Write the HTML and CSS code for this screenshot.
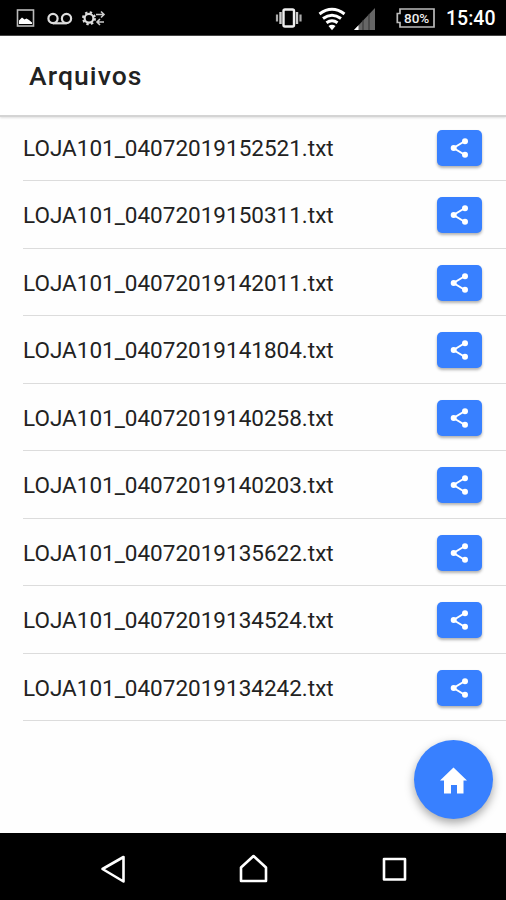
FILE: index.html
```
<!DOCTYPE html>
<html lang="pt-BR">
<head>
  <meta charset="UTF-8" />
  <title>Arquivos</title>
  <link rel="stylesheet" href="styles.css">
</head>
<body>
  <div class="status-bar">
    <svg class="status-left" width="106" height="35" viewBox="0 0 106 35">
      <!-- imagem -->
      <rect x="17.5" y="10" width="16" height="16" fill="none" stroke="#bbb" stroke-width="1.6" />
      <path d="M19 24v-3.5l3-3 2.5 2 2-1 2.5 1.5 3 2.5V24z" fill="#fff" />
      <!-- correio de voz -->
      <g fill="none" stroke="#ddd" stroke-width="2.2">
        <circle cx="53" cy="18.5" r="4.6" />
        <circle cx="66.5" cy="18.5" r="4.6" />
        <path d="M53 23.3h13.5" />
      </g>
      <!-- sincronização -->
      <circle cx="89" cy="18.3" r="4.4" fill="none" stroke="#ddd" stroke-width="2.2" />
      <circle cx="89" cy="18.3" r="6" fill="none" stroke="#ddd" stroke-width="2" stroke-dasharray="2.36 2.36" />
      <path d="M96 14.5h7M101 11.500l3 3-3 3M104 22h-7M100 19l-3 3 3 3" fill="none" stroke="#ccc" stroke-width="1.6" />
    </svg>
    <div class="status-right">
      <svg width="175" height="35" viewBox="265 0 175 35">
        <!-- vibrar -->
        <rect x="283.5" y="9.5" width="10.5" height="17" rx="1.5" fill="none" stroke="#eee" stroke-width="2.4" />
        <path d="M280.5 12v12M297 12v12" stroke="#ccc" stroke-width="2.4" />
        <path d="M277 14.5v7M300.500 14.5v7" stroke="#aaa" stroke-width="2.2" />
        <!-- wifi -->
        <g fill="none" stroke="#fff" stroke-width="3">
          <path d="M319.5 14q12.500-9.500 25 0" />
          <path d="M323 18.500q9-6.500 18 0" />
          <path d="M326.500 22.700q5.500-4 11 0" />
        </g>
        <path d="M328.500 26q3.500-2.500 7 0l-3.500 4.300z" fill="#fff" />
        <!-- sinal -->
        <path d="M354 30L375 8v22z" fill="#666" />
        <path d="M354 30l4.500-4.700V30z" fill="#fff" />
        <path d="M363 20v10M369 14v16" stroke="#333" stroke-width="1" />
        <!-- bateria -->
        <path d="M400 9h34v18h-34v-4.500h-2.700v-9h2.700z" fill="none" stroke="#bbb" stroke-width="1.7" />
        <text class="battery-text" x="404" y="23">80%</text>
      </svg>
      <span class="clock">15:40</span>
    </div>
  </div>

  <header class="toolbar">
    <h1>Arquivos</h1>
  </header>

  <main class="content">
    <ul class="file-list" id="fileList"></ul>
    <button class="fab" aria-label="Início">
      <svg width="30" height="30" viewBox="0 0 30 30">
        <path d="M14.5 2.500L28 15.500H24.500v13h-6.500v-8.500h-6v8.500H5V15.500H1z" fill="#fff" />
      </svg>
    </button>
  </main>

  <nav class="nav-bar">
    <svg width="506" height="67" viewBox="0 833 506 67" fill="none" stroke="#fff" stroke-width="2.6" stroke-linejoin="round">
      <path d="M102.500 869L123.500 857v24.500z" />
      <path d="M253.500 856L266 867.500V881h-25V867.500z" />
      <rect x="384" y="859" width="21" height="20.5" />
    </svg>
  </nav>

  <script>
    const files = [
      "LOJA101_04072019152521.txt",
      "LOJA101_04072019150311.txt",
      "LOJA101_04072019142011.txt",
      "LOJA101_04072019141804.txt",
      "LOJA101_04072019140258.txt",
      "LOJA101_04072019140203.txt",
      "LOJA101_04072019135622.txt",
      "LOJA101_04072019134524.txt",
      "LOJA101_04072019134242.txt"
    ];

    const fileList = document.getElementById("fileList");

    files.forEach(file => {
      const item = document.createElement("li");
      item.className = "file-item";
      item.innerHTML = `
        <span class="file-name">${file}</span>
        <button class="share-button" aria-label="Compartilhar">
          <svg width="20" height="22" viewBox="0 0 20 22">
            <path d="M15 4L3.500 11l11.500 7" fill="none" stroke="#fff" stroke-width="2" />
            <circle cx="15" cy="4.200" r="3" fill="#fff" />
            <circle cx="3.700" cy="11" r="3" fill="#fff" />
            <circle cx="15" cy="17.800" r="3" fill="#fff" />
          </svg>
        </button>`;
      fileList.appendChild(item);
    });
  </script>
</body>
</html>
```
FILE: styles.css
```
* {
  box-sizing: border-box;
}
body {
  display: flex;
  flex-direction: column;
  height: 900px;
  margin: 0;
  font-family: Roboto, sans-serif;
  background: #fefefe;
  overflow: hidden;
}
.status-bar {
  display: flex;
  justify-content: space-between;
  height: 36px;
  background: #000;
  color: #fff;
  border-bottom: 1px solid #444;
}
.status-right {
  display: flex;
  align-items: center;
  padding-right: 11px;
}
.battery-text {
  font-size: 13.5px;
  font-weight: 500;
  fill: #eee;
}
.clock {
  width: 49px;
  margin-left: 6px;
  padding-top: 3px;
  font-size: 19.5px;
  font-weight: 500;
  line-height: 24px;
  white-space: nowrap;
}
.toolbar {
  display: flex;
  align-items: center;
  height: 79px;
  padding-left: 29px;
  background: #fff;
  box-shadow: 0 2px 0 #d4d4d4, 0 3px 2px rgba(0, 0, 0, 0.12);
}
.toolbar h1 {
  margin: 0;
  font-size: 26.5px;
  font-weight: 500;
  letter-spacing: 1.1px;
  line-height: 32px;
  color: #222;
}
.content {
  position: relative;
  flex: 1;
}
.file-list {
  margin: 0;
  padding: 0 0 0 23px;
  list-style: none;
}
.file-item {
  display: flex;
  align-items: center;
  justify-content: space-between;
  height: 67.5px;
  padding: 2px 24px 0 0;
  border-bottom: 1px solid #dcdcdc;
}
.file-item:first-child {
  height: 66px;
  padding-top: 1px;
}
.file-name {
  font-size: 22.5px;
  line-height: 28px;
  color: #222;
}
.share-button {
  display: flex;
  align-items: center;
  justify-content: center;
  width: 45px;
  height: 36px;
  padding: 0;
  border: none;
  border-radius: 5px;
  background: #3880ff;
  box-shadow: 0 2px 3px rgba(0, 0, 0, 0.3);
}
.fab {
  position: absolute;
  right: 13px;
  bottom: 14px;
  display: flex;
  align-items: center;
  justify-content: center;
  width: 79px;
  height: 79px;
  padding: 0;
  border: none;
  border-radius: 50%;
  background: #3880ff;
  box-shadow: 0 4px 10px rgba(0, 0, 0, 0.35);
}
.nav-bar {
  height: 67px;
  background: #000;
}
```
